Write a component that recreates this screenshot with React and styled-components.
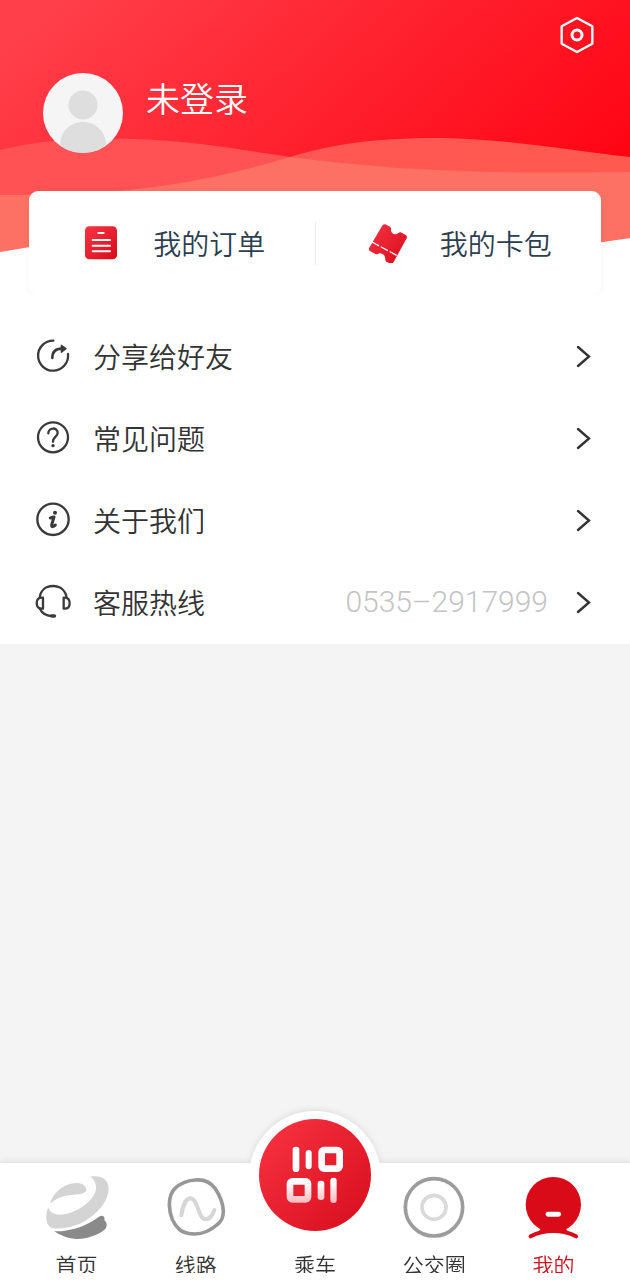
import React, { useState } from 'react'
import styled, { createGlobalStyle } from 'styled-components'

const GlobalStyle = createGlobalStyle`
  * {
    box-sizing: border-box;
  }
  body {
    margin: 0;
    background: #f4f4f4;
    font-family: 'Noto Sans CJK SC', sans-serif;
    font-weight: 350;
  }
  button {
    border: 0;
    padding: 0;
    background: none;
    font: inherit;
    color: inherit;
    cursor: pointer;
  }
  svg {
    display: block;
    flex-shrink: 0;
  }
`

const Page = styled.div`
  display: flex;
  flex-direction: column;
  min-height: 100vh;
`

const Hero = styled.header`
  display: grid;
  background: #fff;

  > * {
    grid-area: 1 / 1;
  }
`

const Waves = styled.svg`
  width: 100%;
  height: 252px;
`

const HeroContent = styled.div`
  min-width: 0;
`

const TopBar = styled.div`
  display: flex;
  justify-content: flex-end;
  padding: 15px 33px 0;
`

const Profile = styled.div`
  display: flex;
  gap: 22px;
  margin: 17px 42px 37px;
`

const Avatar = styled.svg`
  width: 82px;
  height: 82px;
`

const UserName = styled.button`
  height: 52px;
  font-size: 34px;
  line-height: 52px;
  color: #fff;
`

const Card = styled.div`
  display: flex;
  align-items: center;
  height: 104px;
  margin: 0 29px;
  border-radius: 9px;
  background: #fff;
  box-shadow: 0 2px 10px rgba(0, 0, 0, 0.04);
`

const CardItem = styled.button`
  display: flex;
  flex: 1;
  align-items: center;
  justify-content: center;
  gap: 32px;
  padding-left: 3px;
  font-size: 28px;
  line-height: 40px;
  color: #2c3e50;
`

const Divider = styled.span`
  width: 1px;
  height: 43px;
  background: #ececec;
`

const Menu = styled.main`
  padding: 20px 39px 1px 35px;
  background: #fff;
`

const MenuRow = styled.button`
  display: flex;
  align-items: center;
  width: 100%;
  height: 82px;
  font-size: 28px;
  line-height: 40px;
  color: #333;
  text-align: left;
`

const MenuLabel = styled.span`
  flex: 1;
  margin-left: 22px;
`

const Phone = styled.span`
  margin-right: 27px;
  font-family: Roboto, sans-serif;
  font-size: 30px;
  color: #c4c4c4;
`

const TabBar = styled.nav`
  display: grid;
  grid-template-columns: repeat(5, minmax(0, 1fr));
  margin-top: auto;
  padding: 12px 17px 7px;
  background: #fff;
  filter: drop-shadow(0 -1px 3px rgba(0, 0, 0, 0.1));
`

const Tab = styled.button`
  display: flex;
  flex-direction: column;
  align-items: center;
  color: ${props => (props.$active ? '#cf1322' : '#333')};
`

const TabLabel = styled.span`
  height: 21px;
  margin-top: 13px;
  overflow: hidden;
  font-size: 21px;
  line-height: 24px;
`

const RideRing = styled.span`
  flex-shrink: 0;
  width: 132px;
  height: 132px;
  margin: -64px 0 -4px;
  padding: 8px 10px;
  border-radius: 50%;
  background: #fff;
`

const RedGradient = ({ id }) => (
  <linearGradient id={id} x1='0' y1='0' x2='1' y2='1'>
    <stop offset='0' stopColor='#f93443' />
    <stop offset='1' stopColor='#d60c1b' />
  </linearGradient>
)

const HeroWaves = () => (
  <Waves viewBox='0 0 630 252' preserveAspectRatio='none' aria-hidden='true'>
    <defs>
      <linearGradient id='heroRed' gradientUnits='userSpaceOnUse' x1='90' y1='-40' x2='460' y2='360'>
        <stop offset='0' stopColor='#ff404b' />
        <stop offset='1' stopColor='#ff000f' />
      </linearGradient>
      <linearGradient id='heroFront'>
        <stop offset='0' stopColor='#ff5557' />
        <stop offset='1' stopColor='#ff5a50' />
      </linearGradient>
    </defs>
    <rect width='630' height='240' fill='url(#heroRed)' />
    {/* back wave */}
    <path d='M0 150C40 140 85 137 135 139C200 141 245 151 320 161C400 171 480 174 630 172V238L590 244L30 248L0 252Z' fill='#ff5254' />
    {/* front wave */}
    <path d='M0 195C130 195 200 184 290 157C330 145 370 138 440 138C510 139 565 150 630 157V238L590 244L30 248L0 252Z' fill='url(#heroFront)' />
    {/* where both overlap */}
    <path d='M0 195C130 195 200 184 290 157C400 171 480 174 630 172V238L590 244L30 248L0 252Z' fill='#fc7163' />
    <path d='M0 252L30 247L590 244L630 238V252Z' fill='#fff' />
  </Waves>
)

const SettingsIcon = () => (
  <svg width='40' height='40' viewBox='0 0 120 120' fill='none' stroke='#fff'>
    <path d='M60 9L106 34V86L60 111L14 86V34Z' strokeWidth='7' strokeLinejoin='round' />
    <circle cx='60' cy='60' r='15' strokeWidth='9' />
  </svg>
)

const AvatarImage = () => (
  <Avatar viewBox='0 0 82 82' aria-hidden='true'>
    <clipPath id='avatarClip'>
      <circle cx='41' cy='41' r='40' />
    </clipPath>
    <g clipPath='url(#avatarClip)'>
      <rect width='82' height='82' fill='#f5f5f5' />
      <circle cx='41' cy='33' r='14.5' fill='#dedede' />
      <path d='M18 82V73C18 60 28 50 41 50S64 60 64 73V82Z' fill='#dedede' />
    </g>
  </Avatar>
)

const OrderIcon = () => (
  <svg width='40' height='40' viewBox='0 0 120 120'>
    <RedGradient id='orderRed' />
    <rect x='12' y='10' width='96' height='99' rx='13' fill='url(#orderRed)' />
    <path d='M52 30H68M35 51H87M35 68H87M35 85H87' stroke='#fff' strokeWidth='6' strokeLinecap='round' />
  </svg>
)

const TicketIcon = () => (
  <svg width='40' height='40' viewBox='0 0 120 120'>
    <RedGradient id='ticketRed' />
    <path
      d='M52 4L66 11Q70 14 69 19C68 33 82 38 91 30Q94 27 98 28L113 36Q119 40 116 46L77 117Q73 124 66 121L55 116Q51 113 52 106C50 92 37 87 29 93Q26 95 22 93L6 84Q1 81 3 76L42 9Q46 2 52 4Z'
      fill='url(#ticketRed)'
    />
    <path d='M12 57L88 98' stroke='#fff' strokeWidth='4' strokeDasharray='24 6' />
  </svg>
)

const LineIcon = ({ children }) => (
  <svg
    width='36' height='36' viewBox='0 0 108 108' fill='none' stroke='#3a3a3a'
    strokeWidth='7' strokeLinecap='round' strokeLinejoin='round' aria-hidden='true'
  >
    {children}
  </svg>
)

const ShareIcon = () => (
  <LineIcon>
    <path d='M55 8A45 45 0 1 0 99 48' />
    <path d='M52 60C52 42 60 32 80 32' strokeWidth='8' />
    <path d='M79 22L93 32L79 43Z' fill='#3a3a3a' strokeWidth='4' />
  </LineIcon>
)

const QuestionIcon = () => (
  <LineIcon>
    <circle cx='54' cy='52' r='45' />
    <path d='M40 40C40 21 68 21 68 39C68 50 54 50 54 65' />
    <circle cx='54' cy='77' r='5' fill='#3a3a3a' stroke='none' />
  </LineIcon>
)

const InfoIcon = () => (
  <LineIcon>
    <circle cx='54' cy='52' r='47' />
    <circle cx='60' cy='32' r='6' fill='#3a3a3a' stroke='none' />
    <path d='M46 48L57 45L50 69C49 76 56 75 61 69' strokeWidth='9' />
  </LineIcon>
)

const HeadsetIcon = () => (
  <LineIcon>
    <path d='M14 42C16 20 31 6 54 6S92 20 95 42' />
    <path d='M24 41C9 39 5 48 5 58S10 75 24 74Z' />
    <path d='M86 41C100 39 104 48 104 58S100 75 86 74Z' />
    <path d='M15 75C21 87 34 95 49 96' />
    <path d='M51 96H58' strokeWidth='11' />
  </LineIcon>
)

const Chevron = () => (
  <svg width='16' height='24' viewBox='0 0 16 24' fill='none' stroke='#333' strokeWidth='2.4' strokeLinecap='round' aria-hidden='true'>
    <path d='M3 3L14 12.5L3 22' />
  </svg>
)

const TabIcon = ({ children }) => (
  <svg width='64' height='64' viewBox='0 0 192 192' fill='none' strokeLinecap='round' aria-hidden='true'>
    {children}
  </svg>
)

const HomeIcon = () => (
  <TabIcon>
    <path d='M16 86C22 58 52 25 96 24C114 24 126 36 124 47C116 62 80 56 52 65C38 69 26 76 16 86Z' fill='#d4d4d4' />
    <path d='M136 5C168 -1 190 12 191 40C191 78 160 115 114 142C76 160 42 164 18 158C2 150 0 120 10 97C15 122 48 124 82 111C120 96 150 68 153 42C154 26 148 13 136 5Z' fill='#d4d4d4' />
    <path d='M27 169C80 170 125 152 162 125C172 119 181 124 178 136C188 143 186 156 180 163C156 184 116 193 93 192C65 190 45 180 27 169Z' fill='#8a8a8a' />
  </TabIcon>
)

const RouteIcon = () => (
  <TabIcon>
    <path
      d='M93 15C120 12 140 22 153 40C168 62 177 85 178 108C178 130 172 140 158 150C140 166 118 177 93 177C72 177 58 172 48 165C28 148 17 118 16 90C16 68 20 52 33 40C50 24 70 17 93 15Z'
      stroke='#989898' strokeWidth='11'
    />
    <path d='M52 121C56 92 66 70 80 70C102 72 103 132 124 133C139 133 146 120 151 105' stroke='#d6d6d6' strokeWidth='12' />
  </TabIcon>
)

const CircleIcon = () => (
  <TabIcon>
    <circle cx='96' cy='97' r='86' stroke='#9c9c9c' strokeWidth='11' />
    <circle cx='96' cy='97' r='36' stroke='#dadada' strokeWidth='11' />
  </TabIcon>
)

const MineIcon = () => (
  <TabIcon>
    <circle cx='97' cy='89' r='83' fill='#d90b18' />
    <path d='M64 155H130L146 176Q97 160 48 176Z' fill='#d90b18' />
    <path d='M29 184C70 163 124 163 165 184' stroke='#d90b18' strokeWidth='12' />
    <rect x='74' y='110' width='46' height='15' rx='7' fill='#fff' />
  </TabIcon>
)

const RideIcon = () => (
  <svg width='112' height='112' viewBox='0 0 336 336' aria-hidden='true'>
    <defs>
      <RedGradient id='rideRed' />
      <linearGradient id='rideFade' gradientUnits='userSpaceOnUse' x1='0' y1='176' x2='0' y2='252'>
        <stop offset='0.2' stopColor='#fff' />
        <stop offset='1' stopColor='#fbb8bd' />
      </linearGradient>
    </defs>
    <circle cx='168' cy='168' r='168' fill='url(#rideRed)' />
    <g fill='#fff'>
      <rect x='101' y='83' width='20' height='76' rx='9' />
      <rect x='140' y='93' width='18' height='58' rx='9' />
      <rect x='188' y='93' width='54' height='56' rx='7' fill='none' stroke='#fff' strokeWidth='20' />
    </g>
    <g fill='url(#rideFade)'>
      <rect x='93' y='187' width='54' height='54' rx='7' fill='none' stroke='url(#rideFade)' strokeWidth='20' />
      <rect x='176' y='185' width='20' height='58' rx='9' />
      <rect x='214' y='176' width='19' height='76' rx='9' />
    </g>
  </svg>
)

const menuItems = [
  { label: '分享给好友', Icon: ShareIcon },
  { label: '常见问题', Icon: QuestionIcon },
  { label: '关于我们', Icon: InfoIcon },
  { label: '客服热线', Icon: HeadsetIcon, phone: '0535–2917999' }
]

const tabs = [
  { label: '首页', Icon: HomeIcon },
  { label: '线路', Icon: RouteIcon },
  { label: '乘车', Icon: RideIcon, raised: true },
  { label: '公交圈', Icon: CircleIcon },
  { label: '我的', Icon: MineIcon }
]

function App () {
  const [activeTab, setActiveTab] = useState('我的')

  return (
    <Page>
      <GlobalStyle />
      <Hero>
        <HeroWaves />
        <HeroContent>
          <TopBar>
            <button type='button' aria-label='设置'><SettingsIcon /></button>
          </TopBar>
          <Profile>
            <AvatarImage />
            <UserName type='button'>未登录</UserName>
          </Profile>
          <Card>
            <CardItem type='button'><OrderIcon />我的订单</CardItem>
            <Divider />
            <CardItem type='button'><TicketIcon />我的卡包</CardItem>
          </Card>
        </HeroContent>
      </Hero>

      <Menu>
        {menuItems.map(({ label, Icon, phone }) => (
          <MenuRow key={label} type='button'>
            <Icon />
            <MenuLabel>{label}</MenuLabel>
            {phone && <Phone>{phone}</Phone>}
            <Chevron />
          </MenuRow>
        ))}
      </Menu>

      <TabBar>
        {tabs.map(({ label, Icon, raised }) => (
          <Tab key={label} type='button' $active={activeTab === label} onClick={() => setActiveTab(label)}>
            {raised ? <RideRing><Icon /></RideRing> : <Icon />}
            <TabLabel>{label}</TabLabel>
          </Tab>
        ))}
      </TabBar>
    </Page>
  )
}

export default App
